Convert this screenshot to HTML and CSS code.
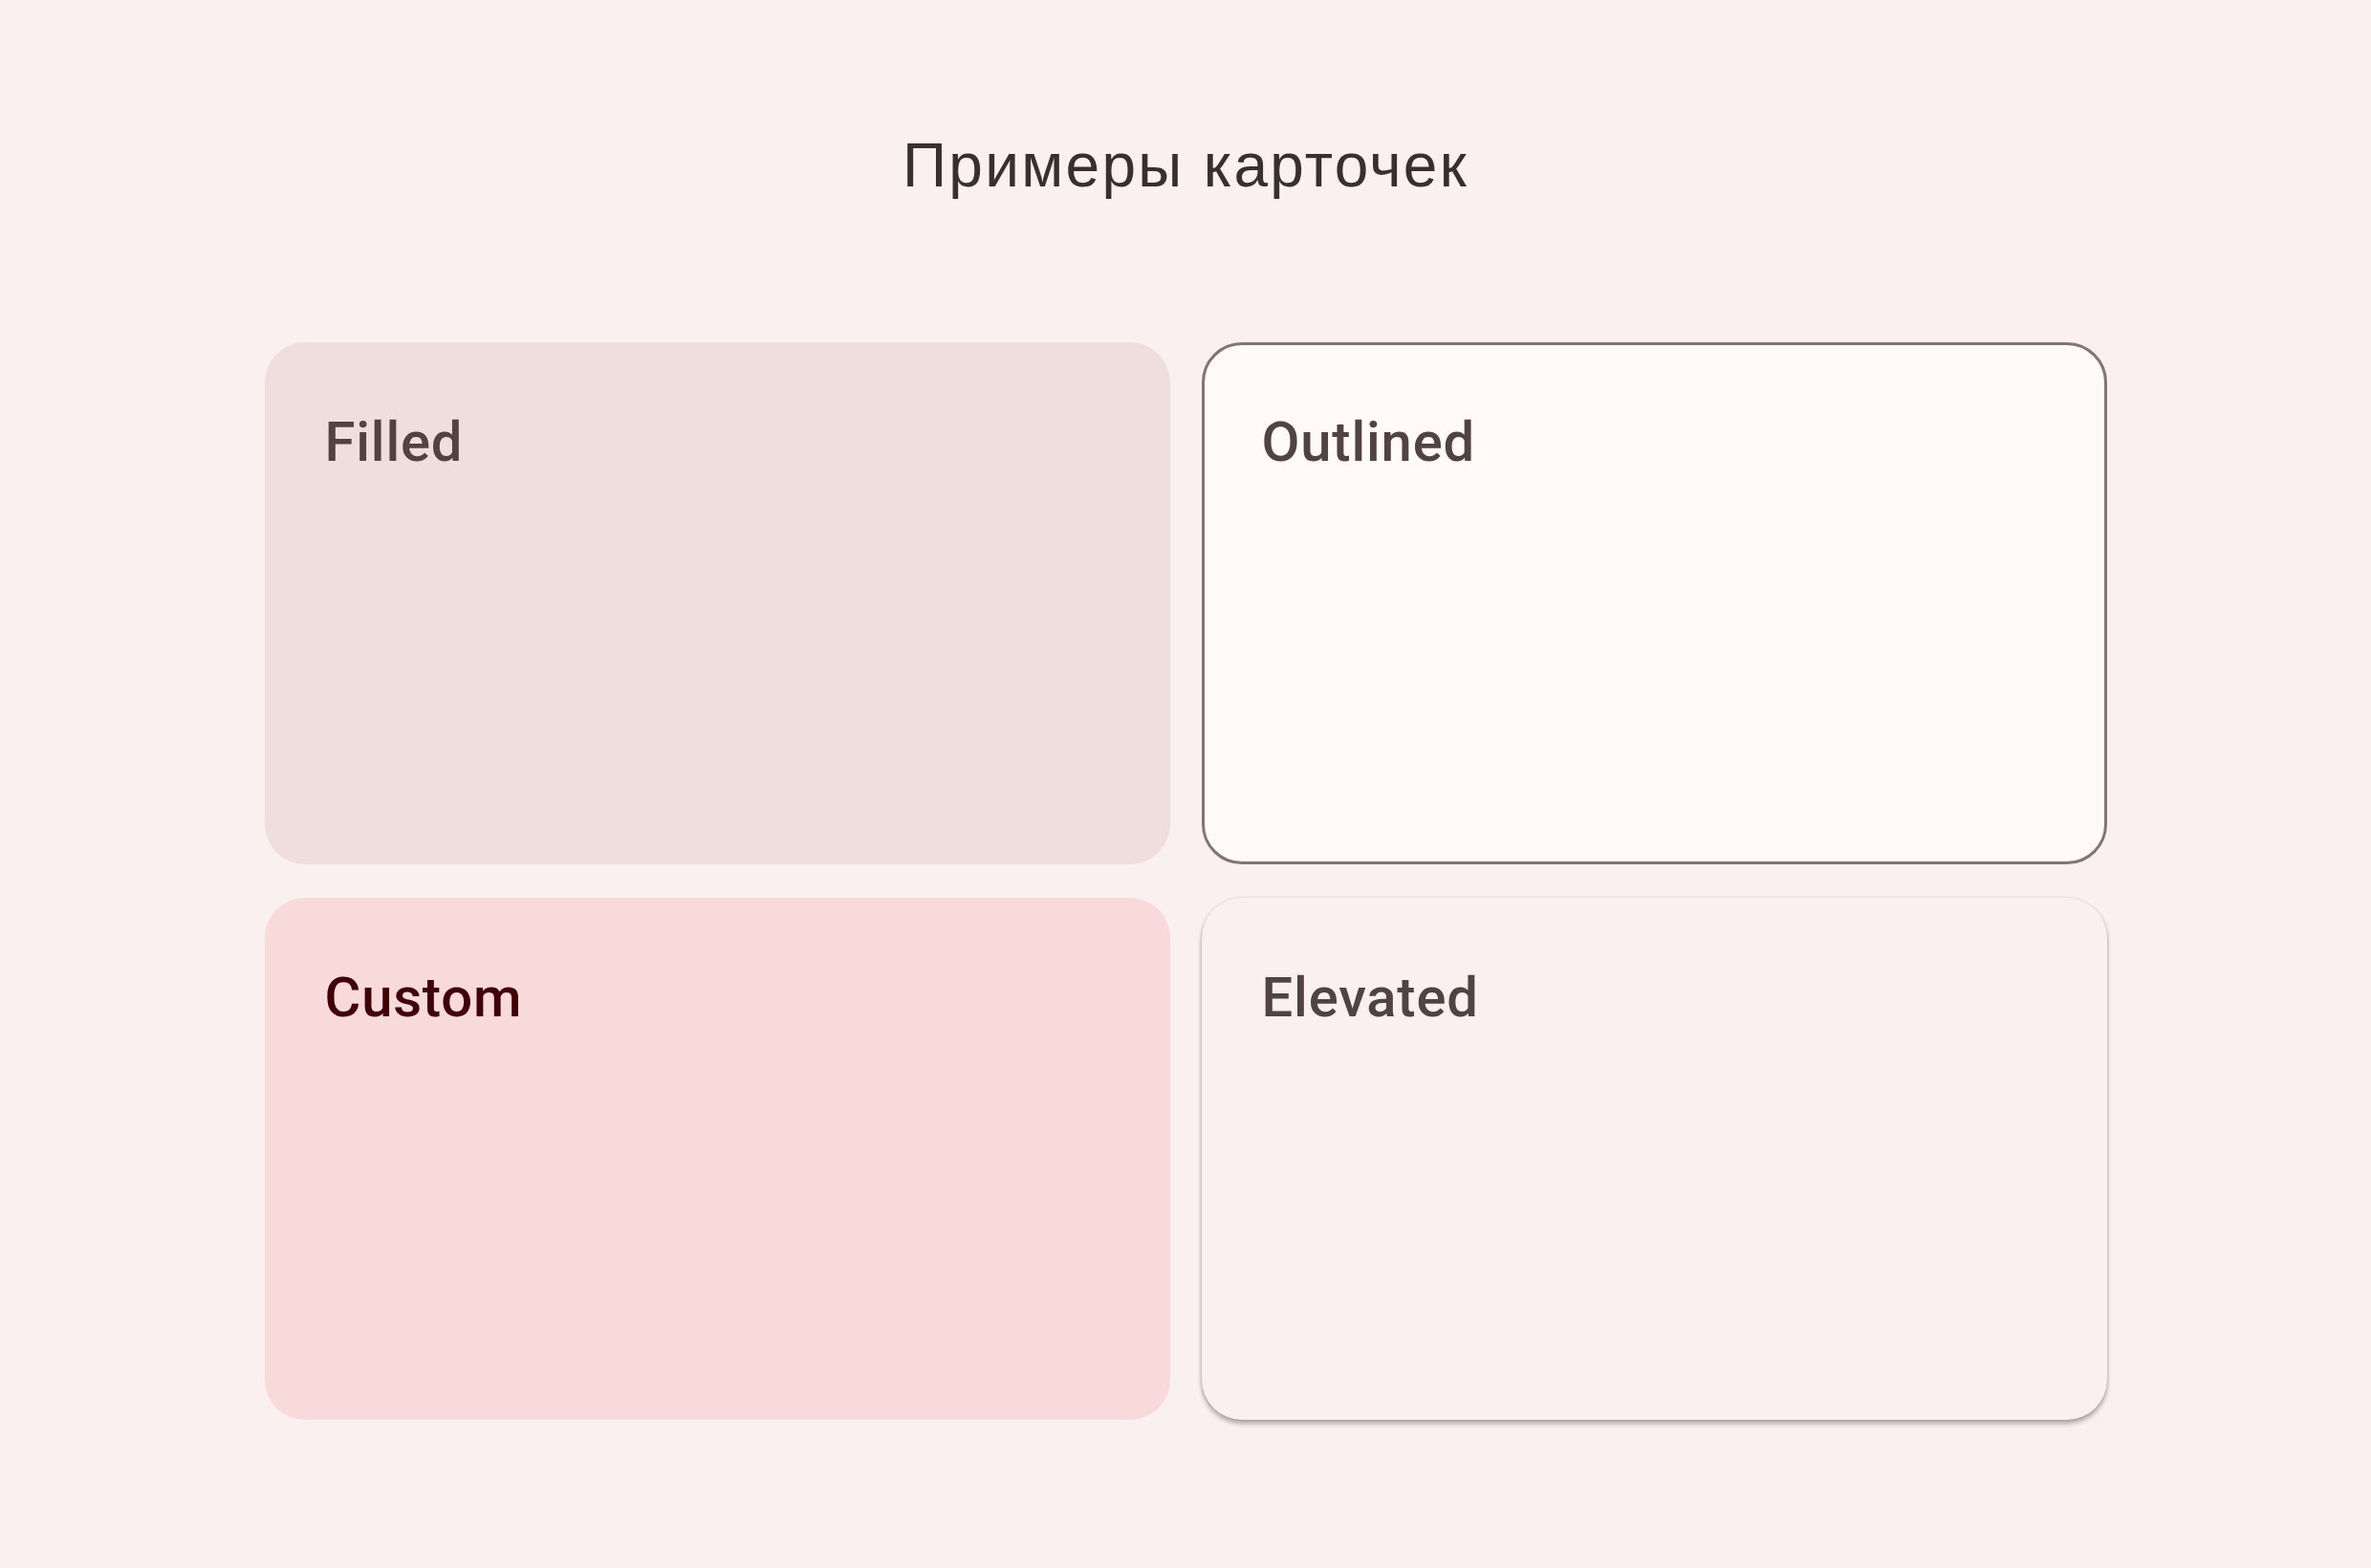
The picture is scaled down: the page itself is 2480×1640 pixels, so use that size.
FILE: index.html
```html
<!DOCTYPE html>
<html lang="ru">
<head>
<meta charset="utf-8">
<title>Примеры карточек</title>
<link rel="stylesheet" href="styles.css">
</head>
<body>
<main class="screen">
  <h1 class="title">Примеры карточек</h1>
  <section class="grid">
    <div class="card card-filled"><span class="card-label">Filled</span></div>
    <div class="card card-outlined"><span class="card-label">Outlined</span></div>
    <div class="card card-custom"><span class="card-label">Custom</span></div>
    <div class="card card-elevated"><span class="card-label">Elevated</span></div>
  </section>
</main>
</body>
</html>
```
FILE: styles.css
```css
html, body {
  margin: 0;
  padding: 0;
}
body {
  background: #f9f0ef;
  width: 2480px;
  height: 1640px;
  overflow: hidden;
}
.screen {
  display: flex;
  flex-direction: column;
  align-items: center;
  padding-top: 136px;
}
.title {
  margin: 0;
  font-family: "Liberation Sans", Arial, sans-serif;
  font-weight: 400;
  font-size: 64px;
  line-height: 74px;
  letter-spacing: 2.3px;
  color: #3b2e2e;
}
.grid {
  margin-top: 148px;
  display: grid;
  grid-template-columns: 947px 947px;
  grid-template-rows: 546px 546px;
  column-gap: 33px;
  row-gap: 35px;
}
.card {
  box-sizing: border-box;
  border-radius: 42px;
  padding: 70px 63px;
}
.card-label {
  display: block;
  font-family: Roboto, "Noto Sans", sans-serif;
  font-weight: 500;
  font-size: 58px;
  letter-spacing: 0.8px;
  color: #524343;
}
.card-filled {
  background: #f0dedd;
}
.card-outlined {
  background: #fff9f8;
  border: 3px solid #857373;
  padding: 67px 60px;
}
.card-custom {
  background: #f8dadb;
}
.card-custom .card-label {
  color: #410008;
}
.card-elevated {
  background: #f9f0ef;
  box-shadow: 0 4px 5px rgba(0, 0, 0, 0.3), 0 0 3px rgba(0, 0, 0, 0.14);
}
```
